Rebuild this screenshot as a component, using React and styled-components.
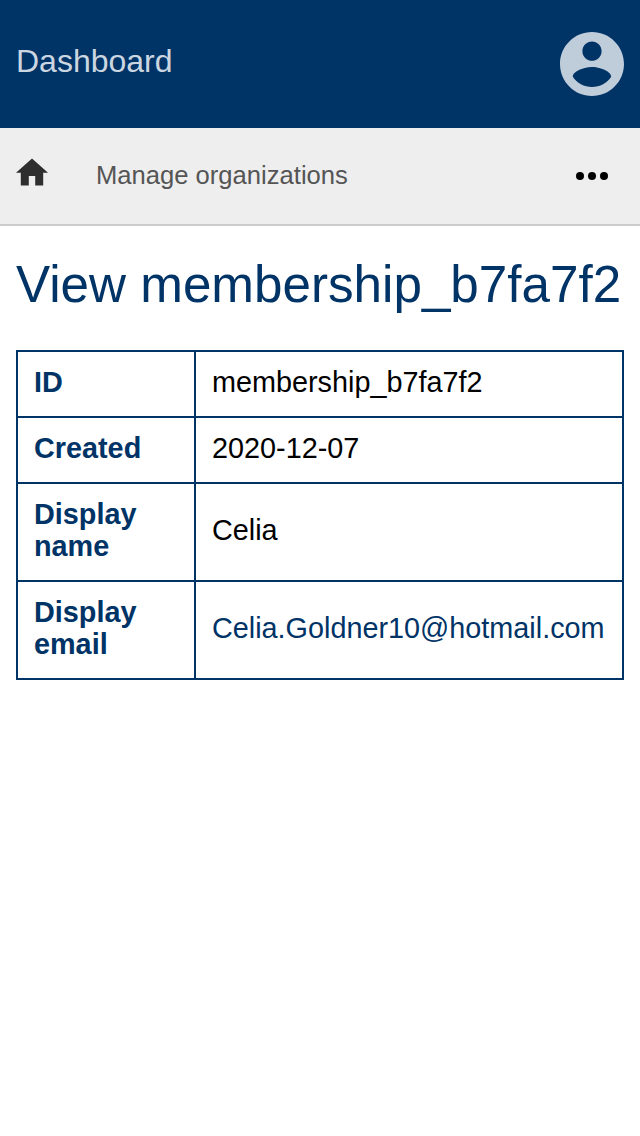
import React from "react";
import styled, { createGlobalStyle } from "styled-components";

const Global = createGlobalStyle`
  * { box-sizing: border-box; }
  body { margin: 0; background: #fff; color: #000; font-family: "Liberation Sans", Arial, sans-serif; }
`;
const Header = styled.header`
  height: 128px;
  padding: 0 16px;
  display: flex;
  align-items: center;
  justify-content: space-between;
  background: #003366;
`;
const Brand = styled.div`
  font-size: 32px;
  line-height: 36px;
  padding-bottom: 6px;
  color: #ccd6e0;
`;
const Avatar = styled.svg`
  width: 64px;
  height: 64px;
  fill: #bfccd9;
`;
const Nav = styled.nav`
  height: 98px;
  padding: 0 32px 0 16px;
  display: flex;
  align-items: center;
  background: #eee;
  border-bottom: 2px solid #ccc;
`;
const HomeIcon = styled.svg`
  width: 32px;
  height: 28px;
  margin-bottom: 8px;
  fill: #2e2e2e;
`;
const Crumb = styled.span`
  flex: 1;
  margin-left: 48px;
  padding-bottom: 2px;
  font-size: 25.6px;
  line-height: 30px;
  color: #555;
`;
const MoreIcon = styled.svg`
  width: 32px;
  height: 8px;
  fill: #000;
`;
const Main = styled.main`
  padding: 30px 16px;
`;
const Title = styled.h1`
  margin: 0 0 36px;
  font-size: 51.2px;
  line-height: 58px;
  font-weight: 400;
  color: #003366;
  white-space: nowrap;
`;
const Table = styled.table`
  width: 608px;
  border-collapse: collapse;
  font-size: 28.8px;
  line-height: 32px;
`;
const Label = styled.th`
  width: 178px;
  padding: 14px 16px 18px;
  border: 2px solid #003366;
  text-align: left;
  color: #003366;
`;
const Value = styled.td`
  padding: 14px 16px 18px;
  border: 2px solid #003366;
  color: ${(p) => (p.$link ? "#003366" : "#000")};
`;

const rows = [
  ["ID", "membership_b7fa7f2"],
  ["Created", "2020-12-07"],
  ["Display name", "Celia"],
  ["Display email", "Celia.Goldner10@hotmail.com", true],
];

export default function App() {
  return (
    <>
      <Global />
      <Header>
        <Brand>Dashboard</Brand>
        <Avatar viewBox="2 2 20 20">
          <path d="M12 2C6.48 2 2 6.48 2 12s4.48 10 10 10 10-4.48 10-10S17.52 2 12 2zm0 3c1.66 0 3 1.34 3 3s-1.34 3-3 3-3-1.34-3-3 1.34-3 3-3zm0 14.2c-2.5 0-4.71-1.28-6-3.22.03-1.99 4-3.08 6-3.08 1.99 0 5.97 1.09 6 3.08-1.29 1.94-3.5 3.22-6 3.22z" />
        </Avatar>
      </Header>
      <Nav>
        <HomeIcon viewBox="2 2.75 20 17.5">
          <path d="M10 20v-6h4v6h5v-8h3L12 3 2 12h3v8z" />
        </HomeIcon>
        <Crumb>Manage organizations</Crumb>
        <MoreIcon viewBox="0 0 32 8">
          <circle cx="4" cy="4" r="4" />
          <circle cx="16" cy="4" r="4" />
          <circle cx="28" cy="4" r="4" />
        </MoreIcon>
      </Nav>
      <Main>
        <Title>View membership_b7fa7f2</Title>
        <Table>
          <tbody>
            {rows.map(([label, value, link]) => (
              <tr key={label}>
                <Label>{label}</Label>
                <Value $link={link}>{value}</Value>
              </tr>
            ))}
          </tbody>
        </Table>
      </Main>
    </>
  );
}
